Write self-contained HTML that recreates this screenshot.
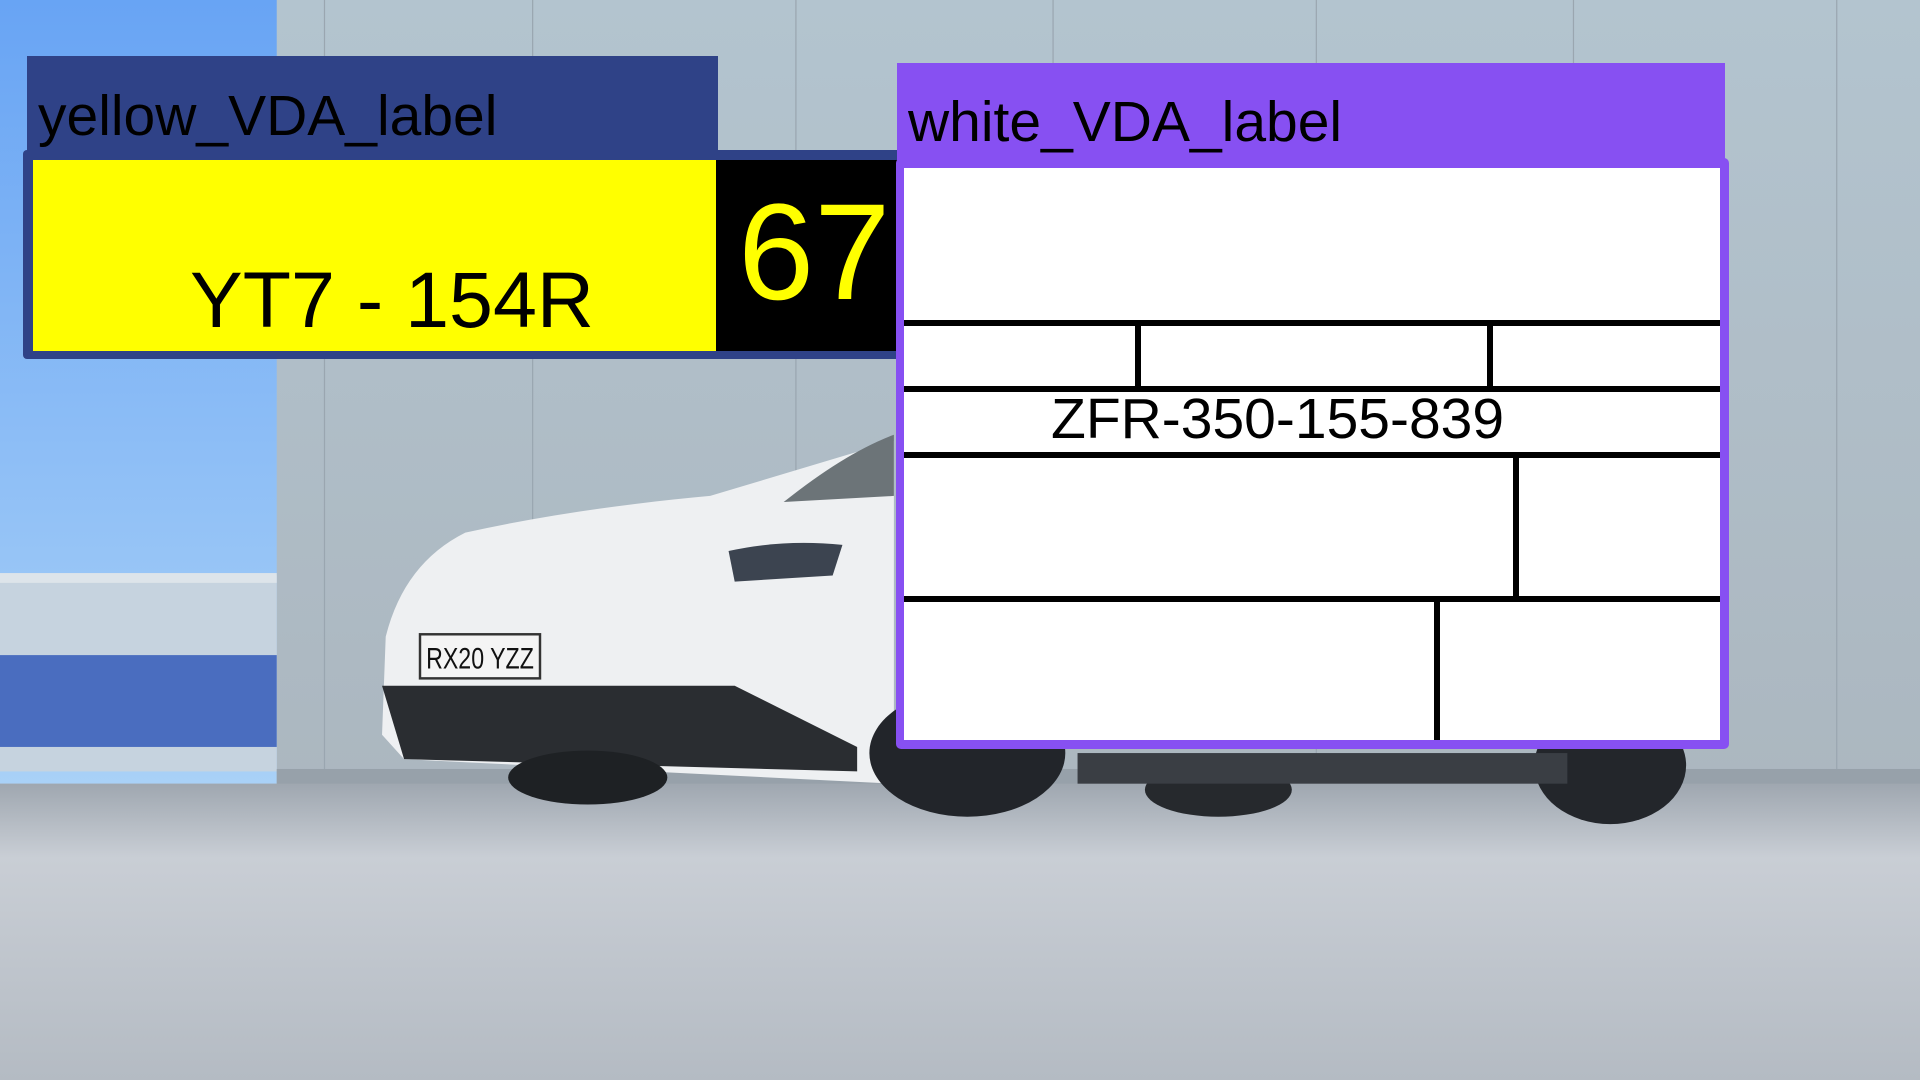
<!DOCTYPE html>
<html><head><meta charset="utf-8"><style>
html,body{margin:0;padding:0;width:1920px;height:1080px;overflow:hidden;font-family:"Liberation Sans",Arial,sans-serif}
.abs{position:absolute}
</style></head><body>
<svg class="abs" style="left:0;top:0" width="1920" height="1080" viewBox="0 0 1568 882" preserveAspectRatio="none">
<defs>
<linearGradient id="sky" x1="0" y1="0" x2="0" y2="1"><stop offset="0" stop-color="#68a4f4"/><stop offset="1" stop-color="#a9d1f7"/></linearGradient>
<linearGradient id="bld" x1="0" y1="0" x2="0" y2="1"><stop offset="0" stop-color="#b3c4cf"/><stop offset="1" stop-color="#a9b2ba"/></linearGradient>
<linearGradient id="grd" x1="0" y1="0" x2="0" y2="1"><stop offset="0" stop-color="#9fa7b0"/><stop offset="0.25" stop-color="#c9ced5"/><stop offset="1" stop-color="#b4bbc3"/></linearGradient>
</defs>
<rect width="1568" height="882" fill="url(#bld)"/>
<rect width="226" height="640" fill="url(#sky)"/>
<rect x="0" y="470" width="226" height="160" fill="#c6d3df"/>
<rect x="0" y="535" width="226" height="75" fill="#4a6dbf"/>
<rect x="0" y="468" width="226" height="8" fill="#dde4ea"/>
<g stroke="#9aa6b0" stroke-width="1">
<line x1="265" y1="0" x2="265" y2="635"/><line x1="435" y1="0" x2="435" y2="635"/><line x1="650" y1="0" x2="650" y2="635"/><line x1="860" y1="0" x2="860" y2="635"/><line x1="1075" y1="0" x2="1075" y2="640"/><line x1="1285" y1="0" x2="1285" y2="640"/><line x1="1500" y1="0" x2="1500" y2="645"/></g>
<rect x="226" y="628" width="1342" height="16" fill="#97a1aa"/>
<rect x="0" y="640" width="1568" height="242" fill="url(#grd)"/>
<path d="M312 600 L315 520 Q330 460 380 435 Q470 415 580 405 L730 360 L730 640 L330 620 Z" fill="#eef0f2"/>
<path d="M640 410 Q690 370 730 355 L730 405 Z" fill="#6c7478"/>
<path d="M312 560 L600 560 L700 610 L700 630 L330 620 Z" fill="#2a2d31"/>
<rect x="343" y="518" width="98" height="36" fill="#f4f4f4" stroke="#333" stroke-width="2"/>
<text x="348" y="546" font-size="24" textLength="88" lengthAdjust="spacingAndGlyphs" fill="#111">RX20 YZZ</text>
<path d="M595 450 Q640 440 688 445 L680 470 L600 475 Z" fill="#3c4450"/>
<ellipse cx="480" cy="635" rx="65" ry="22" fill="#1e2124"/>
<ellipse cx="790" cy="615" rx="80" ry="52" fill="#22252a"/>
<ellipse cx="995" cy="645" rx="60" ry="22" fill="#26292d"/>
<ellipse cx="1315" cy="625" rx="62" ry="48" fill="#23262b"/>
<rect x="880" y="615" width="400" height="25" fill="#3a3e44"/>
</svg>

<div class="abs" style="left:27px;top:56px;width:691px;height:100px;background:#2f4287"></div>
<div class="abs" style="left:38px;top:84px;font-size:57px;line-height:64px;color:#000">yellow_VDA_label</div>
<div class="abs" style="left:23px;top:150px;width:880px;height:209px;background:#2f4287;border-radius:4px"></div>
<div class="abs" style="left:33px;top:160px;width:683px;height:191px;background:#ffff00"></div>
<div class="abs" style="left:716px;top:160px;width:190px;height:191px;background:#000"></div>
<div class="abs" style="left:190px;top:255px;font-size:79px;line-height:90px;color:#000;white-space:nowrap">YT7 - 154R</div>
<div class="abs" style="left:738px;top:183px;font-size:137px;line-height:140px;color:#ffff00">67</div>

<div class="abs" style="left:897px;top:63px;width:828px;height:101px;background:#8750f2"></div>
<div class="abs" style="left:908px;top:90px;font-size:57px;line-height:64px;color:#000">white_VDA_label</div>
<div class="abs" style="left:896px;top:158px;width:833px;height:591px;background:#8750f2;border-radius:5px"></div>
<div class="abs" style="left:904px;top:168px;width:816px;height:572px;background:#fff"></div>
<div class="abs" style="left:904px;top:320px;width:816px;height:6px;background:#000"></div>
<div class="abs" style="left:904px;top:386px;width:816px;height:6px;background:#000"></div>
<div class="abs" style="left:904px;top:452px;width:816px;height:6px;background:#000"></div>
<div class="abs" style="left:904px;top:596px;width:816px;height:6px;background:#000"></div>
<div class="abs" style="left:1135px;top:323px;width:6px;height:66px;background:#000"></div>
<div class="abs" style="left:1487px;top:323px;width:6px;height:66px;background:#000"></div>
<div class="abs" style="left:1513px;top:455px;width:6px;height:144px;background:#000"></div>
<div class="abs" style="left:1434px;top:599px;width:6px;height:141px;background:#000"></div>
<div class="abs" style="left:1051px;top:387px;font-size:57px;line-height:64px;color:#000;white-space:nowrap">ZFR-350-155-839</div>
</body></html>
